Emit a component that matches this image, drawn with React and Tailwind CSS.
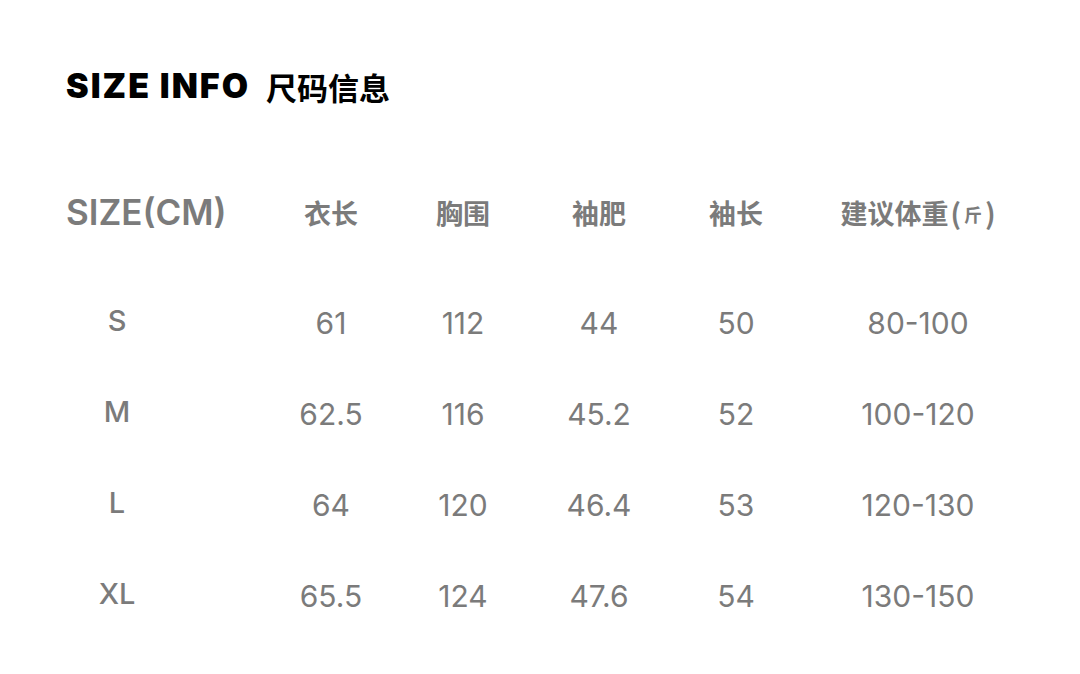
import React from "react";

const rows = [
  ["S", "61", "112", "44", "50", "80-100"],
  ["M", "62.5", "116", "45.2", "52", "100-120"],
  ["L", "64", "120", "46.4", "53", "120-130"],
  ["XL", "65.5", "124", "47.6", "54", "130-150"],
];

const widths = ["w-[134px]", "w-[130px]", "w-[142px]", "w-[132px]", "w-[232px]"];

export default function App() {
  const cjk = { fontFamily: '"Noto Sans CJK SC", "Noto Sans", sans-serif' };
  const num = { fontFamily: 'Inter, "Noto Sans", sans-serif' };
  return (
    <div className="w-[1080px] h-[674px] bg-white overflow-hidden pl-[66px] pt-[64px]">
      <div className="flex items-center h-[44px]">
        <span className="text-[34px] font-black text-black tracking-[2px] leading-none" style={num}>SIZE INFO</span>
        <span className="ml-[16px] text-[31px] font-bold text-black leading-none" style={cjk}>尺码信息</span>
      </div>
      <div className="mt-[59px] flex items-center h-[90px] text-[#7b7b7b]">
        <div className="w-[198px] text-[35px] font-semibold leading-none" style={num}>SIZE(CM)</div>
        {["衣长", "胸围", "袖肥", "袖长"].map((h, i) => (
          <div key={h} className={`${widths[i]} text-center text-[27px] font-bold leading-none`} style={cjk}>{h}</div>
        ))}
        <div className={`${widths[4]} flex justify-center items-center text-[27px] font-bold leading-none`} style={cjk}>
          <span>建议体重</span>
          <span className="ml-[2px] text-[28px]">(</span>
          <span className="mx-[3px] text-[18px] mt-[4px]">斤</span>
          <span className="text-[28px]">)</span>
        </div>
      </div>
      <div className="mt-[20px]">
        {rows.map((r) => (
          <div key={r[0]} className="flex items-center h-[91px] text-[#7b7b7b]" style={num}>
            <div className="w-[198px]">
              <div className="w-[102px] text-center text-[29px] font-medium leading-none -mt-[4px]">{r[0]}</div>
            </div>
            {r.slice(1).map((v, i) => (
              <div key={i} className={`${widths[i]} text-center text-[30px] font-normal leading-none`}>{v}</div>
            ))}
          </div>
        ))}
      </div>
    </div>
  );
}
